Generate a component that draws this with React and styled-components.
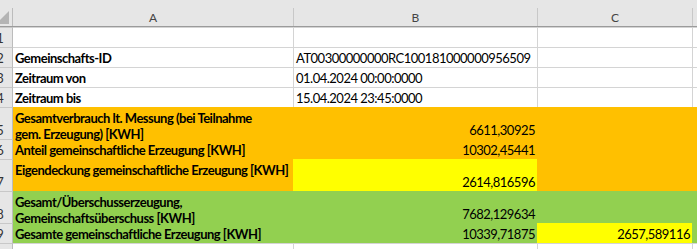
import React from "react";
import styled, { createGlobalStyle } from "styled-components";

const ORANGE = "#FFC000";
const YELLOW = "#FFFF00";
const GREEN = "#92D050";
const GRID = "#d4d4d4";
const HEAD_BG = "#e6e6e6";

const GlobalStyle = createGlobalStyle`
  html, body { margin: 0; padding: 0; background: #ffffff; overflow: hidden; }
  body { font-family: Lato, "Liberation Sans", sans-serif; font-size: 13px; letter-spacing: -0.5px; color: #000; }
`;

const Sheet = styled.div`
  display: grid;
  grid-template-columns: 25px 280px 244px 155px 1fr;
  grid-template-rows: 27px 20px 20px 20px 20px 32px 20px 32px 32px 20px 20px;
  width: 709px;
  margin-left: -12px;
`;

const HeadCell = styled.div`
  display: flex;
  padding-top: 8px;
  background: ${HEAD_BG};
  border-bottom: 1px solid #9b9b9b;
`;

const HeadLabel = styled.div`
  flex: 1;
  display: flex;
  justify-content: center;
  align-items: flex-end;
  border-left: ${(p) => (p.$noSep ? "none" : "1px solid #c8c8c8")};
  color: #444;
  font-size: 12px;
  letter-spacing: 0;
  line-height: 16px;
`;

const Corner = styled.div`
  flex: 1;
  display: flex;
  justify-content: flex-end;
  align-items: flex-end;
  padding: 0 3px 2px 0;
  border-right: 1px solid #bcbcbc;
`;

const SelectAll = styled.div`
  width: 0;
  height: 0;
  border-left: 13px solid transparent;
  border-bottom: 13px solid #b4b4b4;
`;

const RowHead = styled.div`
  display: flex;
  justify-content: center;
  align-items: flex-end;
  padding-bottom: 1px;
  background: ${HEAD_BG};
  border-top: 1px solid #c8c8c8;
  border-right: 1px solid #bcbcbc;
  color: #333;
  letter-spacing: 0;
  line-height: 16px;
`;

const Cell = styled.div`
  display: flex;
  flex-direction: column;
  justify-content: ${(p) => (p.$valign === "top" ? "flex-start" : "flex-end")};
  align-items: ${(p) => (p.$align === "right" ? "flex-end" : "flex-start")};
  padding: ${(p) => (p.$valign === "top" ? "1.5px 2px 0 2px" : "0 2px 1px 2px")};
  background: ${(p) => p.$fill || "#ffffff"};
  border-top: 1px solid ${(p) => (p.$fill ? "transparent" : GRID)};
  border-left: ${(p) =>
    p.$first ? "none" : `1px solid ${p.$fill ? "transparent" : GRID}`};
  font-weight: ${(p) => (p.$bold ? 700 : 400)};
  line-height: 16px;
  white-space: nowrap;
  min-width: 0;
  z-index: ${(p) => p.$z || 0};
`;

const Line = styled.span`
  display: block;
`;

const rows = [
  { n: 1 },
  { n: 2, a: ["Gemeinschafts-ID"], b: "AT00300000000RC100181000000956509" },
  { n: 3, a: ["Zeitraum von"], b: "01.04.2024 00:00:0000" },
  { n: 4, a: ["Zeitraum bis"], b: "15.04.2024 23:45:0000" },
  {
    n: 5,
    fill: ORANGE,
    top: true,
    a: ["Gesamtverbrauch lt. Messung (bei Teilnahme", "gem. Erzeugung) [KWH]"],
    b: "6611,30925",
    num: true,
  },
  { n: 6, fill: ORANGE, top: true, a: ["Anteil gemeinschaftliche Erzeugung [KWH]"], b: "10302,45441", num: true },
  {
    n: 7,
    fill: ORANGE,
    top: true,
    a: ["Eigendeckung gemeinschaftliche Erzeugung [KWH]"],
    b: "2614,816596",
    bFill: YELLOW,
    num: true,
  },
  {
    n: 8,
    fill: GREEN,
    top: true,
    a: ["Gesamt/Überschusserzeugung,", "Gemeinschaftsüberschuss [KWH]"],
    b: "7682,129634",
    num: true,
  },
  {
    n: 9,
    fill: GREEN,
    top: true,
    a: ["Gesamte gemeinschaftliche Erzeugung [KWH]"],
    b: "10339,71875",
    c: "2657,589116",
    cFill: YELLOW,
    num: true,
  },
  { n: 10 },
];

export default function App() {
  return (
    <>
      <GlobalStyle />
      <Sheet>
        <HeadCell>
          <Corner>
            <SelectAll />
          </Corner>
        </HeadCell>
        <HeadCell>
          <HeadLabel $noSep>A</HeadLabel>
        </HeadCell>
        <HeadCell>
          <HeadLabel>B</HeadLabel>
        </HeadCell>
        <HeadCell>
          <HeadLabel>C</HeadLabel>
        </HeadCell>
        <HeadCell>
          <HeadLabel />
        </HeadCell>

        {rows.map((r) => (
          <React.Fragment key={r.n}>
            <RowHead>{r.n}</RowHead>
            <Cell
              $first
              $fill={r.fill}
              $bold
              $valign={r.top ? "top" : "bottom"}
              $z={r.top ? 20 - r.n : 0}
            >
              {(r.a || []).map((t) => (
                <Line key={t}>{t}</Line>
              ))}
            </Cell>
            <Cell $fill={r.bFill || r.fill} $align={r.num ? "right" : "left"}>
              {r.b}
            </Cell>
            <Cell $fill={r.cFill || r.fill} $align="right">
              {r.c}
            </Cell>
            <Cell $fill={r.fill} />
          </React.Fragment>
        ))}
      </Sheet>
    </>
  );
}
